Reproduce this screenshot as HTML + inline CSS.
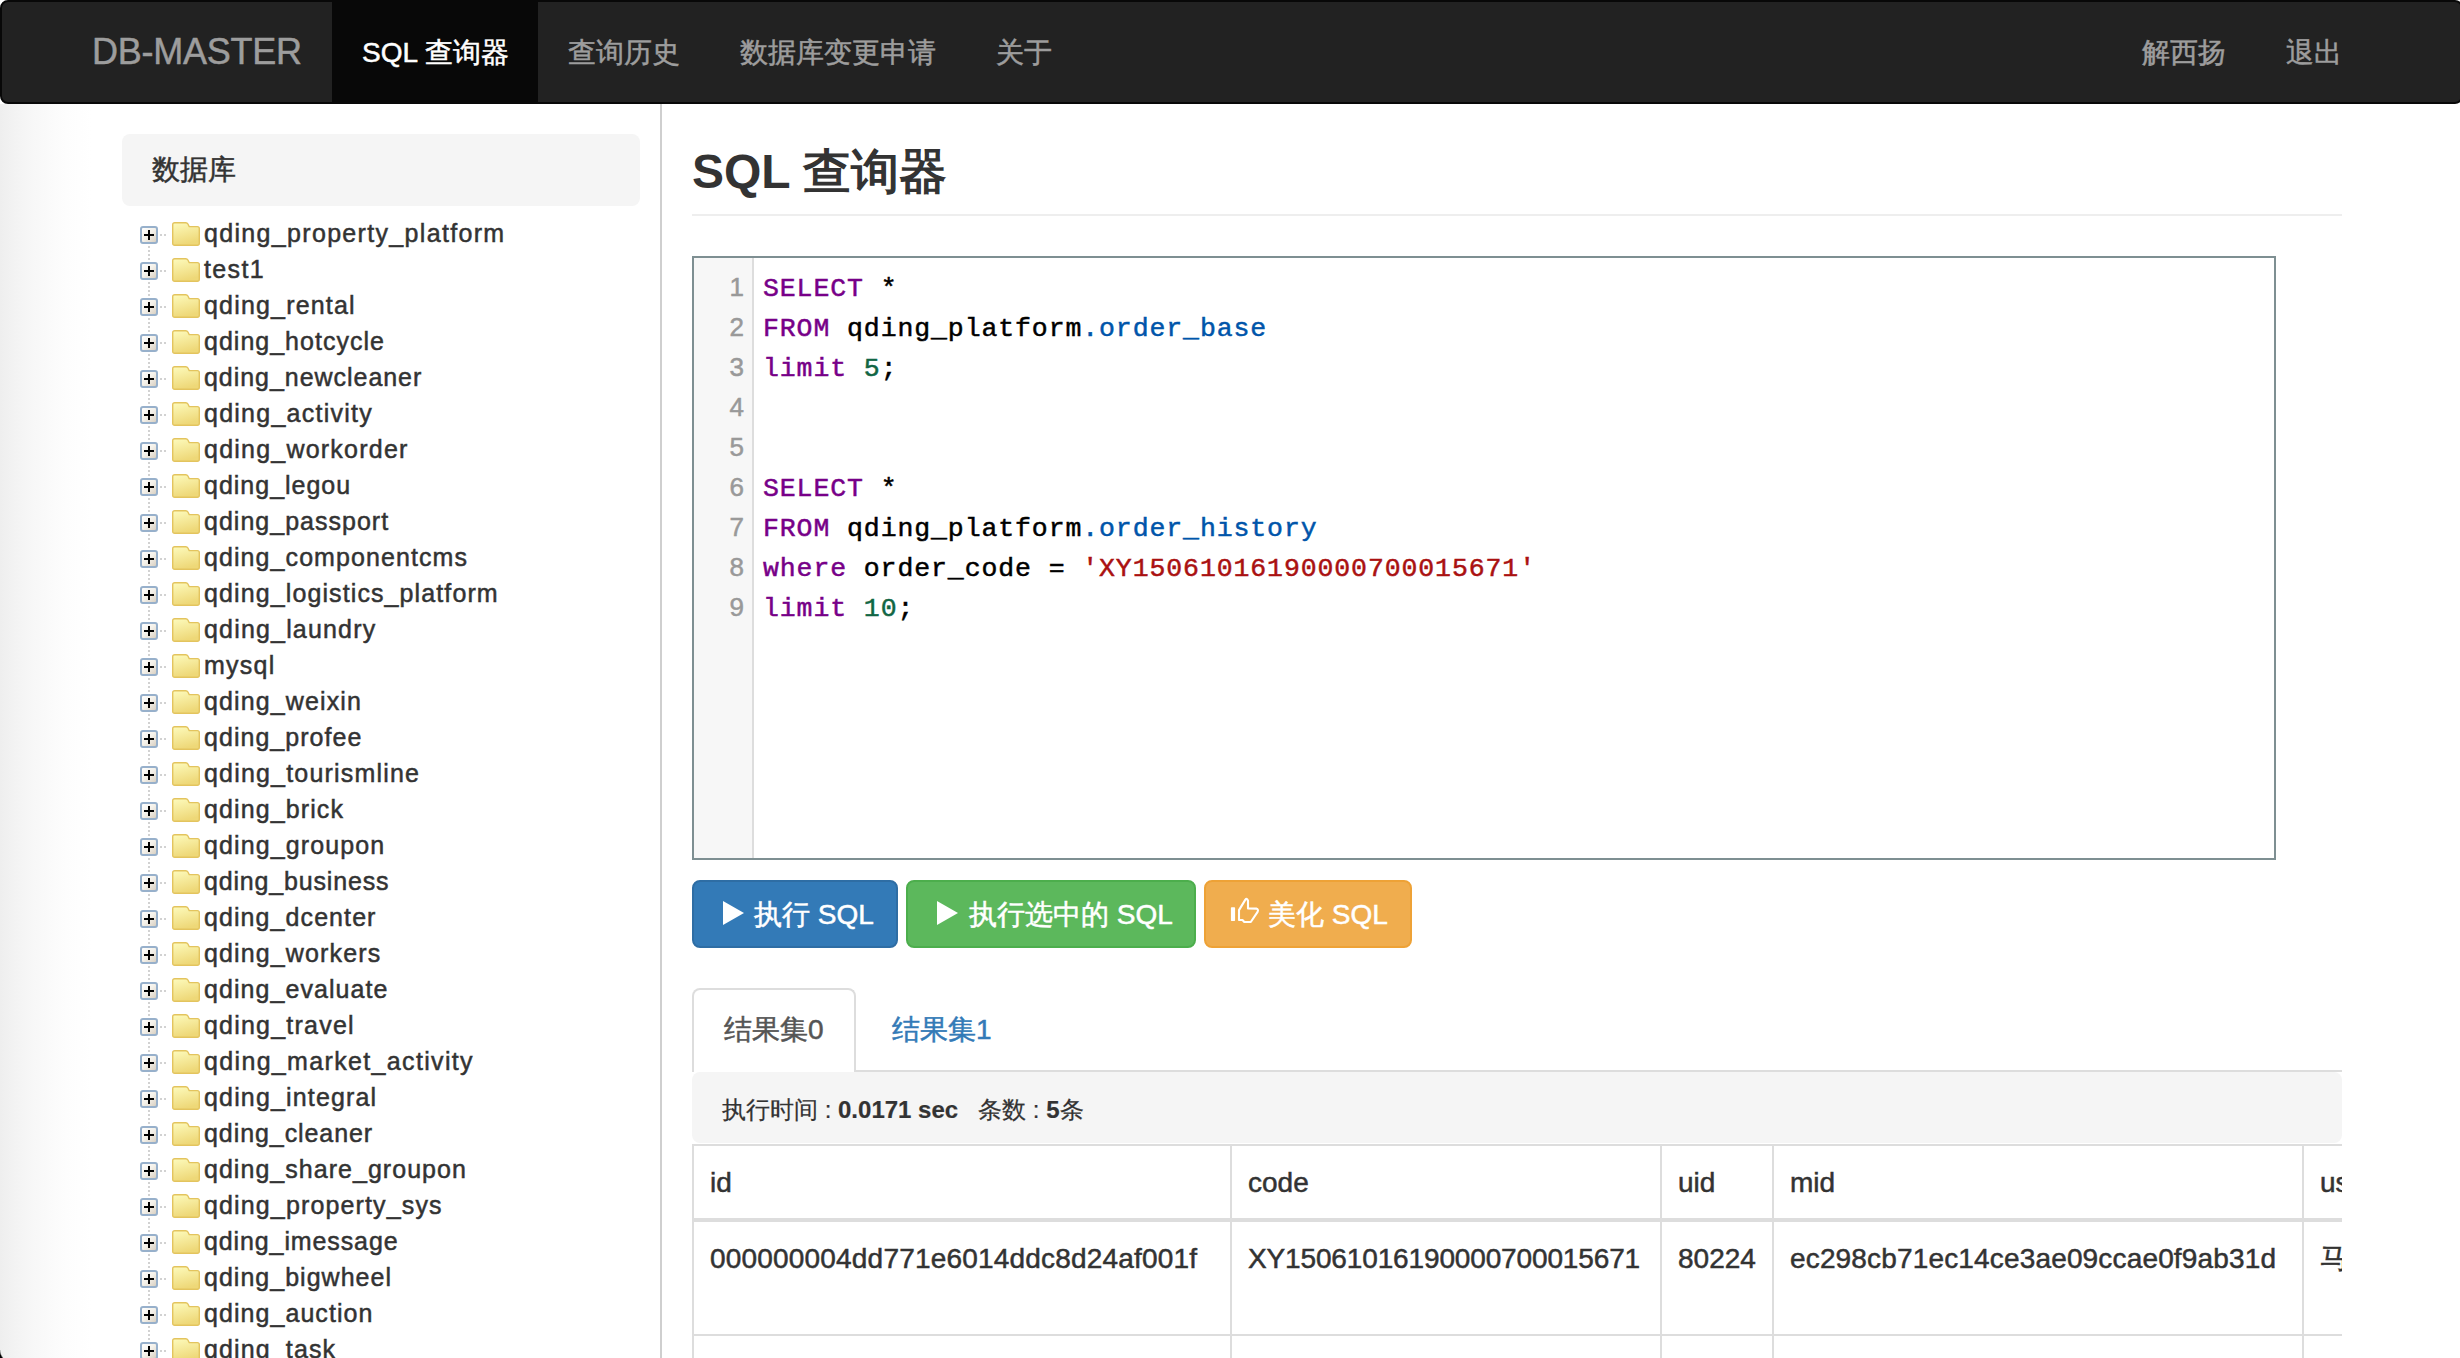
<!DOCTYPE html>
<html><head><meta charset="utf-8">
<style>
html,body{margin:0;padding:0;}
body{width:2460px;height:1358px;overflow:hidden;position:relative;background:#fff;font-family:"Liberation Sans",sans-serif;color:#333;-webkit-text-stroke:0.5px currentColor;}
.abs{position:absolute;}
#lgrad{left:0;top:104px;width:100px;height:1254px;background:linear-gradient(to right,#eeeeee 0px,#f3f3f3 15px,#f7f7f7 32px,#fafafa 48px,#fdfdfd 66px,#fff 92px);}
#nav{left:0;top:0;width:2463px;height:104px;box-sizing:border-box;border:2px solid #080808;border-radius:8px;background:#222;}
.nl{position:absolute;top:32.5px;height:40px;line-height:40px;font-size:28px;color:#9d9d9d;white-space:nowrap;}
#brand{font-size:36px;left:92px;top:31.5px;letter-spacing:-0.25px;}
#active{left:332px;top:2px;width:206px;height:100px;background:#080808;}
#vline{left:660px;top:104px;width:2px;height:1254px;background:#cfcfcf;}
#dbhead{left:122px;top:134px;width:518px;height:72px;background:#f5f5f5;border-radius:8px;}
#dbhead span{position:absolute;left:30px;top:16px;line-height:40px;font-size:28px;color:#333;}
#h1{-webkit-text-stroke:0;left:692px;top:139px;font-size:48px;font-weight:bold;line-height:66px;color:#333;white-space:nowrap;}
#hline{left:692px;top:214px;width:1650px;height:2px;background:#eee;}

.tr{position:absolute;left:140px;height:36px;width:480px;}
.pb{position:absolute;left:0;top:4px;width:18px;height:18px;box-sizing:border-box;border:2px solid #97b0cb;border-radius:3px;background:linear-gradient(135deg,#ffffff 0%,#f4f1ea 50%,#d9d0c2 100%);}
.pb::before{content:"";position:absolute;left:2px;top:6px;width:10px;height:2px;background:#000;}
.pb::after{content:"";position:absolute;left:6px;top:2px;width:2px;height:10px;background:#000;}
.fd{position:absolute;left:32px;top:0;width:28px;height:24px;}

.tr span{position:absolute;left:64px;top:-3px;font-size:25px;line-height:28px;letter-spacing:1.2px;color:#333;white-space:nowrap;}
.dh{position:absolute;left:20px;top:12px;width:8px;height:2px;background:repeating-linear-gradient(to right,#d2d2d2 0 2px,transparent 2px 4px);}
.dv{position:absolute;left:148px;width:2px;background:repeating-linear-gradient(to bottom,#d2d2d2 0 2px,transparent 2px 4px);}
#editor{left:692px;top:256px;width:1584px;height:604px;box-sizing:border-box;border:2px solid #7e8f92;background:#fff;}
#gutter{position:absolute;left:0;top:0;width:58px;height:600px;background:#f7f7f7;border-right:2px solid #ddd;}
.ln{position:absolute;right:8px;width:40px;text-align:right;font-size:26px;line-height:40px;color:#999;}
.cl{position:absolute;left:69px;font-family:"Liberation Mono",monospace;font-size:26.5px;letter-spacing:0.9px;line-height:40px;color:#000;white-space:pre;-webkit-text-stroke:0.5px currentColor;}
.k{color:#770088}.n{color:#116644}.s{color:#aa1111}.v{color:#0055aa}
.btn{position:absolute;top:880px;height:68px;box-sizing:border-box;border:2px solid;border-radius:8px;color:#fff;font-size:28px;line-height:40px;white-space:nowrap;}
.btn span{position:absolute;top:13px;}
.play{position:absolute;top:19px;width:0;height:0;border-left:21px solid #fff;border-top:12.5px solid transparent;border-bottom:12.5px solid transparent;}
#tabs{left:692px;top:988px;}
.tab0{position:absolute;left:692px;top:988px;width:164px;height:84px;box-sizing:border-box;border:2px solid #ddd;border-bottom:none;border-radius:8px 8px 0 0;background:#fff;}
.tabline{position:absolute;left:856px;top:1070px;width:1486px;height:2px;background:#ddd;}
.tabt{position:absolute;top:1010px;font-size:28px;line-height:40px;white-space:nowrap;}
#info{left:692px;top:1072px;width:1650px;height:71px;background:#f5f5f5;border-radius:8px;}
#info span{position:absolute;left:30px;top:18px;font-size:24px;-webkit-text-stroke:0.2px currentColor;line-height:40px;white-space:pre;color:#333;}
#tbl{left:692px;top:1144px;width:1650px;height:214px;overflow:hidden;}
.hl{position:absolute;left:0;width:1650px;background:#ddd;}
.vl{position:absolute;top:0;width:2px;height:214px;background:#ddd;}
.tc{position:absolute;font-size:28px;line-height:40px;white-space:nowrap;color:#333;}
</style></head>
<body>
<div class="abs" id="lgrad"></div>
<div class="abs" id="nav"></div>
<div class="abs" id="active"></div>
<div class="nl" id="brand">DB-MASTER</div>
<div class="nl" style="left:362px;color:#fff">SQL 查询器</div>
<div class="nl" style="left:568px">查询历史</div>
<div class="nl" style="left:740px">数据库变更申请</div>
<div class="nl" style="left:996px">关于</div>
<div class="nl" style="left:2142px">解西扬</div>
<div class="nl" style="left:2286px">退出</div>

<div class="abs" id="vline"></div>
<div class="abs" id="dbhead"><span>数据库</span></div>

<div class="abs" id="h1">SQL <span style="font-weight:normal;-webkit-text-stroke:1.4px #333">查询器</span></div>
<div class="abs" id="hline"></div>

<div class="abs" style="left:0;top:0"><div class="tr" style="top:222px"><i class="pb"></i><i class="dh"></i><i class="fd"><svg width="28" height="24" viewBox="0 0 28 24"><defs><linearGradient id="fg" x1="0" y1="0" x2="0.3" y2="1"><stop offset="0" stop-color="#fdfbbd"/><stop offset="1" stop-color="#eed878"/></linearGradient></defs><path d="M0.7,2.7 Q0.7,0.7 2.7,0.7 L13.8,0.7 Q15.2,0.7 15.9,2 L17.2,4.6 L25.3,4.6 Q27.3,4.6 27.3,6.6 L27.3,21.3 Q27.3,23.3 25.3,23.3 L2.7,23.3 Q0.7,23.3 0.7,21.3 Z" fill="url(#fg)" stroke="#e3c45e" stroke-width="1.4"/></svg></i><span style="letter-spacing:1.326px">qding_property_platform</span></div>
<div class="tr" style="top:258px"><i class="pb"></i><i class="dh"></i><i class="fd"><svg width="28" height="24" viewBox="0 0 28 24"><defs><linearGradient id="fg" x1="0" y1="0" x2="0.3" y2="1"><stop offset="0" stop-color="#fdfbbd"/><stop offset="1" stop-color="#eed878"/></linearGradient></defs><path d="M0.7,2.7 Q0.7,0.7 2.7,0.7 L13.8,0.7 Q15.2,0.7 15.9,2 L17.2,4.6 L25.3,4.6 Q27.3,4.6 27.3,6.6 L27.3,21.3 Q27.3,23.3 25.3,23.3 L2.7,23.3 Q0.7,23.3 0.7,21.3 Z" fill="url(#fg)" stroke="#e3c45e" stroke-width="1.4"/></svg></i><span style="letter-spacing:1.356px">test1</span></div>
<div class="tr" style="top:294px"><i class="pb"></i><i class="dh"></i><i class="fd"><svg width="28" height="24" viewBox="0 0 28 24"><defs><linearGradient id="fg" x1="0" y1="0" x2="0.3" y2="1"><stop offset="0" stop-color="#fdfbbd"/><stop offset="1" stop-color="#eed878"/></linearGradient></defs><path d="M0.7,2.7 Q0.7,0.7 2.7,0.7 L13.8,0.7 Q15.2,0.7 15.9,2 L17.2,4.6 L25.3,4.6 Q27.3,4.6 27.3,6.6 L27.3,21.3 Q27.3,23.3 25.3,23.3 L2.7,23.3 Q0.7,23.3 0.7,21.3 Z" fill="url(#fg)" stroke="#e3c45e" stroke-width="1.4"/></svg></i><span style="letter-spacing:1.179px">qding_rental</span></div>
<div class="tr" style="top:330px"><i class="pb"></i><i class="dh"></i><i class="fd"><svg width="28" height="24" viewBox="0 0 28 24"><defs><linearGradient id="fg" x1="0" y1="0" x2="0.3" y2="1"><stop offset="0" stop-color="#fdfbbd"/><stop offset="1" stop-color="#eed878"/></linearGradient></defs><path d="M0.7,2.7 Q0.7,0.7 2.7,0.7 L13.8,0.7 Q15.2,0.7 15.9,2 L17.2,4.6 L25.3,4.6 Q27.3,4.6 27.3,6.6 L27.3,21.3 Q27.3,23.3 25.3,23.3 L2.7,23.3 Q0.7,23.3 0.7,21.3 Z" fill="url(#fg)" stroke="#e3c45e" stroke-width="1.4"/></svg></i><span style="letter-spacing:1.007px">qding_hotcycle</span></div>
<div class="tr" style="top:366px"><i class="pb"></i><i class="dh"></i><i class="fd"><svg width="28" height="24" viewBox="0 0 28 24"><defs><linearGradient id="fg" x1="0" y1="0" x2="0.3" y2="1"><stop offset="0" stop-color="#fdfbbd"/><stop offset="1" stop-color="#eed878"/></linearGradient></defs><path d="M0.7,2.7 Q0.7,0.7 2.7,0.7 L13.8,0.7 Q15.2,0.7 15.9,2 L17.2,4.6 L25.3,4.6 Q27.3,4.6 27.3,6.6 L27.3,21.3 Q27.3,23.3 25.3,23.3 L2.7,23.3 Q0.7,23.3 0.7,21.3 Z" fill="url(#fg)" stroke="#e3c45e" stroke-width="1.4"/></svg></i><span style="letter-spacing:0.957px">qding_newcleaner</span></div>
<div class="tr" style="top:402px"><i class="pb"></i><i class="dh"></i><i class="fd"><svg width="28" height="24" viewBox="0 0 28 24"><defs><linearGradient id="fg" x1="0" y1="0" x2="0.3" y2="1"><stop offset="0" stop-color="#fdfbbd"/><stop offset="1" stop-color="#eed878"/></linearGradient></defs><path d="M0.7,2.7 Q0.7,0.7 2.7,0.7 L13.8,0.7 Q15.2,0.7 15.9,2 L17.2,4.6 L25.3,4.6 Q27.3,4.6 27.3,6.6 L27.3,21.3 Q27.3,23.3 25.3,23.3 L2.7,23.3 Q0.7,23.3 0.7,21.3 Z" fill="url(#fg)" stroke="#e3c45e" stroke-width="1.4"/></svg></i><span style="letter-spacing:1.25px">qding_activity</span></div>
<div class="tr" style="top:438px"><i class="pb"></i><i class="dh"></i><i class="fd"><svg width="28" height="24" viewBox="0 0 28 24"><defs><linearGradient id="fg" x1="0" y1="0" x2="0.3" y2="1"><stop offset="0" stop-color="#fdfbbd"/><stop offset="1" stop-color="#eed878"/></linearGradient></defs><path d="M0.7,2.7 Q0.7,0.7 2.7,0.7 L13.8,0.7 Q15.2,0.7 15.9,2 L17.2,4.6 L25.3,4.6 Q27.3,4.6 27.3,6.6 L27.3,21.3 Q27.3,23.3 25.3,23.3 L2.7,23.3 Q0.7,23.3 0.7,21.3 Z" fill="url(#fg)" stroke="#e3c45e" stroke-width="1.4"/></svg></i><span style="letter-spacing:1.222px">qding_workorder</span></div>
<div class="tr" style="top:474px"><i class="pb"></i><i class="dh"></i><i class="fd"><svg width="28" height="24" viewBox="0 0 28 24"><defs><linearGradient id="fg" x1="0" y1="0" x2="0.3" y2="1"><stop offset="0" stop-color="#fdfbbd"/><stop offset="1" stop-color="#eed878"/></linearGradient></defs><path d="M0.7,2.7 Q0.7,0.7 2.7,0.7 L13.8,0.7 Q15.2,0.7 15.9,2 L17.2,4.6 L25.3,4.6 Q27.3,4.6 27.3,6.6 L27.3,21.3 Q27.3,23.3 25.3,23.3 L2.7,23.3 Q0.7,23.3 0.7,21.3 Z" fill="url(#fg)" stroke="#e3c45e" stroke-width="1.4"/></svg></i><span style="letter-spacing:0.993px">qding_legou</span></div>
<div class="tr" style="top:510px"><i class="pb"></i><i class="dh"></i><i class="fd"><svg width="28" height="24" viewBox="0 0 28 24"><defs><linearGradient id="fg" x1="0" y1="0" x2="0.3" y2="1"><stop offset="0" stop-color="#fdfbbd"/><stop offset="1" stop-color="#eed878"/></linearGradient></defs><path d="M0.7,2.7 Q0.7,0.7 2.7,0.7 L13.8,0.7 Q15.2,0.7 15.9,2 L17.2,4.6 L25.3,4.6 Q27.3,4.6 27.3,6.6 L27.3,21.3 Q27.3,23.3 25.3,23.3 L2.7,23.3 Q0.7,23.3 0.7,21.3 Z" fill="url(#fg)" stroke="#e3c45e" stroke-width="1.4"/></svg></i><span style="letter-spacing:1.015px">qding_passport</span></div>
<div class="tr" style="top:546px"><i class="pb"></i><i class="dh"></i><i class="fd"><svg width="28" height="24" viewBox="0 0 28 24"><defs><linearGradient id="fg" x1="0" y1="0" x2="0.3" y2="1"><stop offset="0" stop-color="#fdfbbd"/><stop offset="1" stop-color="#eed878"/></linearGradient></defs><path d="M0.7,2.7 Q0.7,0.7 2.7,0.7 L13.8,0.7 Q15.2,0.7 15.9,2 L17.2,4.6 L25.3,4.6 Q27.3,4.6 27.3,6.6 L27.3,21.3 Q27.3,23.3 25.3,23.3 L2.7,23.3 Q0.7,23.3 0.7,21.3 Z" fill="url(#fg)" stroke="#e3c45e" stroke-width="1.4"/></svg></i><span style="letter-spacing:1.079px">qding_componentcms</span></div>
<div class="tr" style="top:582px"><i class="pb"></i><i class="dh"></i><i class="fd"><svg width="28" height="24" viewBox="0 0 28 24"><defs><linearGradient id="fg" x1="0" y1="0" x2="0.3" y2="1"><stop offset="0" stop-color="#fdfbbd"/><stop offset="1" stop-color="#eed878"/></linearGradient></defs><path d="M0.7,2.7 Q0.7,0.7 2.7,0.7 L13.8,0.7 Q15.2,0.7 15.9,2 L17.2,4.6 L25.3,4.6 Q27.3,4.6 27.3,6.6 L27.3,21.3 Q27.3,23.3 25.3,23.3 L2.7,23.3 Q0.7,23.3 0.7,21.3 Z" fill="url(#fg)" stroke="#e3c45e" stroke-width="1.4"/></svg></i><span style="letter-spacing:1.107px">qding_logistics_platform</span></div>
<div class="tr" style="top:618px"><i class="pb"></i><i class="dh"></i><i class="fd"><svg width="28" height="24" viewBox="0 0 28 24"><defs><linearGradient id="fg" x1="0" y1="0" x2="0.3" y2="1"><stop offset="0" stop-color="#fdfbbd"/><stop offset="1" stop-color="#eed878"/></linearGradient></defs><path d="M0.7,2.7 Q0.7,0.7 2.7,0.7 L13.8,0.7 Q15.2,0.7 15.9,2 L17.2,4.6 L25.3,4.6 Q27.3,4.6 27.3,6.6 L27.3,21.3 Q27.3,23.3 25.3,23.3 L2.7,23.3 Q0.7,23.3 0.7,21.3 Z" fill="url(#fg)" stroke="#e3c45e" stroke-width="1.4"/></svg></i><span style="letter-spacing:1.176px">qding_laundry</span></div>
<div class="tr" style="top:654px"><i class="pb"></i><i class="dh"></i><i class="fd"><svg width="28" height="24" viewBox="0 0 28 24"><defs><linearGradient id="fg" x1="0" y1="0" x2="0.3" y2="1"><stop offset="0" stop-color="#fdfbbd"/><stop offset="1" stop-color="#eed878"/></linearGradient></defs><path d="M0.7,2.7 Q0.7,0.7 2.7,0.7 L13.8,0.7 Q15.2,0.7 15.9,2 L17.2,4.6 L25.3,4.6 Q27.3,4.6 27.3,6.6 L27.3,21.3 Q27.3,23.3 25.3,23.3 L2.7,23.3 Q0.7,23.3 0.7,21.3 Z" fill="url(#fg)" stroke="#e3c45e" stroke-width="1.4"/></svg></i><span style="letter-spacing:1.259px">mysql</span></div>
<div class="tr" style="top:690px"><i class="pb"></i><i class="dh"></i><i class="fd"><svg width="28" height="24" viewBox="0 0 28 24"><defs><linearGradient id="fg" x1="0" y1="0" x2="0.3" y2="1"><stop offset="0" stop-color="#fdfbbd"/><stop offset="1" stop-color="#eed878"/></linearGradient></defs><path d="M0.7,2.7 Q0.7,0.7 2.7,0.7 L13.8,0.7 Q15.2,0.7 15.9,2 L17.2,4.6 L25.3,4.6 Q27.3,4.6 27.3,6.6 L27.3,21.3 Q27.3,23.3 25.3,23.3 L2.7,23.3 Q0.7,23.3 0.7,21.3 Z" fill="url(#fg)" stroke="#e3c45e" stroke-width="1.4"/></svg></i><span style="letter-spacing:1.126px">qding_weixin</span></div>
<div class="tr" style="top:726px"><i class="pb"></i><i class="dh"></i><i class="fd"><svg width="28" height="24" viewBox="0 0 28 24"><defs><linearGradient id="fg" x1="0" y1="0" x2="0.3" y2="1"><stop offset="0" stop-color="#fdfbbd"/><stop offset="1" stop-color="#eed878"/></linearGradient></defs><path d="M0.7,2.7 Q0.7,0.7 2.7,0.7 L13.8,0.7 Q15.2,0.7 15.9,2 L17.2,4.6 L25.3,4.6 Q27.3,4.6 27.3,6.6 L27.3,21.3 Q27.3,23.3 25.3,23.3 L2.7,23.3 Q0.7,23.3 0.7,21.3 Z" fill="url(#fg)" stroke="#e3c45e" stroke-width="1.4"/></svg></i><span style="letter-spacing:1.036px">qding_profee</span></div>
<div class="tr" style="top:762px"><i class="pb"></i><i class="dh"></i><i class="fd"><svg width="28" height="24" viewBox="0 0 28 24"><defs><linearGradient id="fg" x1="0" y1="0" x2="0.3" y2="1"><stop offset="0" stop-color="#fdfbbd"/><stop offset="1" stop-color="#eed878"/></linearGradient></defs><path d="M0.7,2.7 Q0.7,0.7 2.7,0.7 L13.8,0.7 Q15.2,0.7 15.9,2 L17.2,4.6 L25.3,4.6 Q27.3,4.6 27.3,6.6 L27.3,21.3 Q27.3,23.3 25.3,23.3 L2.7,23.3 Q0.7,23.3 0.7,21.3 Z" fill="url(#fg)" stroke="#e3c45e" stroke-width="1.4"/></svg></i><span style="letter-spacing:1.186px">qding_tourismline</span></div>
<div class="tr" style="top:798px"><i class="pb"></i><i class="dh"></i><i class="fd"><svg width="28" height="24" viewBox="0 0 28 24"><defs><linearGradient id="fg" x1="0" y1="0" x2="0.3" y2="1"><stop offset="0" stop-color="#fdfbbd"/><stop offset="1" stop-color="#eed878"/></linearGradient></defs><path d="M0.7,2.7 Q0.7,0.7 2.7,0.7 L13.8,0.7 Q15.2,0.7 15.9,2 L17.2,4.6 L25.3,4.6 Q27.3,4.6 27.3,6.6 L27.3,21.3 Q27.3,23.3 25.3,23.3 L2.7,23.3 Q0.7,23.3 0.7,21.3 Z" fill="url(#fg)" stroke="#e3c45e" stroke-width="1.4"/></svg></i><span style="letter-spacing:1.11px">qding_brick</span></div>
<div class="tr" style="top:834px"><i class="pb"></i><i class="dh"></i><i class="fd"><svg width="28" height="24" viewBox="0 0 28 24"><defs><linearGradient id="fg" x1="0" y1="0" x2="0.3" y2="1"><stop offset="0" stop-color="#fdfbbd"/><stop offset="1" stop-color="#eed878"/></linearGradient></defs><path d="M0.7,2.7 Q0.7,0.7 2.7,0.7 L13.8,0.7 Q15.2,0.7 15.9,2 L17.2,4.6 L25.3,4.6 Q27.3,4.6 27.3,6.6 L27.3,21.3 Q27.3,23.3 25.3,23.3 L2.7,23.3 Q0.7,23.3 0.7,21.3 Z" fill="url(#fg)" stroke="#e3c45e" stroke-width="1.4"/></svg></i><span style="letter-spacing:1.109px">qding_groupon</span></div>
<div class="tr" style="top:870px"><i class="pb"></i><i class="dh"></i><i class="fd"><svg width="28" height="24" viewBox="0 0 28 24"><defs><linearGradient id="fg" x1="0" y1="0" x2="0.3" y2="1"><stop offset="0" stop-color="#fdfbbd"/><stop offset="1" stop-color="#eed878"/></linearGradient></defs><path d="M0.7,2.7 Q0.7,0.7 2.7,0.7 L13.8,0.7 Q15.2,0.7 15.9,2 L17.2,4.6 L25.3,4.6 Q27.3,4.6 27.3,6.6 L27.3,21.3 Q27.3,23.3 25.3,23.3 L2.7,23.3 Q0.7,23.3 0.7,21.3 Z" fill="url(#fg)" stroke="#e3c45e" stroke-width="1.4"/></svg></i><span style="letter-spacing:0.825px">qding_business</span></div>
<div class="tr" style="top:906px"><i class="pb"></i><i class="dh"></i><i class="fd"><svg width="28" height="24" viewBox="0 0 28 24"><defs><linearGradient id="fg" x1="0" y1="0" x2="0.3" y2="1"><stop offset="0" stop-color="#fdfbbd"/><stop offset="1" stop-color="#eed878"/></linearGradient></defs><path d="M0.7,2.7 Q0.7,0.7 2.7,0.7 L13.8,0.7 Q15.2,0.7 15.9,2 L17.2,4.6 L25.3,4.6 Q27.3,4.6 27.3,6.6 L27.3,21.3 Q27.3,23.3 25.3,23.3 L2.7,23.3 Q0.7,23.3 0.7,21.3 Z" fill="url(#fg)" stroke="#e3c45e" stroke-width="1.4"/></svg></i><span style="letter-spacing:1.082px">qding_dcenter</span></div>
<div class="tr" style="top:942px"><i class="pb"></i><i class="dh"></i><i class="fd"><svg width="28" height="24" viewBox="0 0 28 24"><defs><linearGradient id="fg" x1="0" y1="0" x2="0.3" y2="1"><stop offset="0" stop-color="#fdfbbd"/><stop offset="1" stop-color="#eed878"/></linearGradient></defs><path d="M0.7,2.7 Q0.7,0.7 2.7,0.7 L13.8,0.7 Q15.2,0.7 15.9,2 L17.2,4.6 L25.3,4.6 Q27.3,4.6 27.3,6.6 L27.3,21.3 Q27.3,23.3 25.3,23.3 L2.7,23.3 Q0.7,23.3 0.7,21.3 Z" fill="url(#fg)" stroke="#e3c45e" stroke-width="1.4"/></svg></i><span style="letter-spacing:1.13px">qding_workers</span></div>
<div class="tr" style="top:978px"><i class="pb"></i><i class="dh"></i><i class="fd"><svg width="28" height="24" viewBox="0 0 28 24"><defs><linearGradient id="fg" x1="0" y1="0" x2="0.3" y2="1"><stop offset="0" stop-color="#fdfbbd"/><stop offset="1" stop-color="#eed878"/></linearGradient></defs><path d="M0.7,2.7 Q0.7,0.7 2.7,0.7 L13.8,0.7 Q15.2,0.7 15.9,2 L17.2,4.6 L25.3,4.6 Q27.3,4.6 27.3,6.6 L27.3,21.3 Q27.3,23.3 25.3,23.3 L2.7,23.3 Q0.7,23.3 0.7,21.3 Z" fill="url(#fg)" stroke="#e3c45e" stroke-width="1.4"/></svg></i><span style="letter-spacing:1.062px">qding_evaluate</span></div>
<div class="tr" style="top:1014px"><i class="pb"></i><i class="dh"></i><i class="fd"><svg width="28" height="24" viewBox="0 0 28 24"><defs><linearGradient id="fg" x1="0" y1="0" x2="0.3" y2="1"><stop offset="0" stop-color="#fdfbbd"/><stop offset="1" stop-color="#eed878"/></linearGradient></defs><path d="M0.7,2.7 Q0.7,0.7 2.7,0.7 L13.8,0.7 Q15.2,0.7 15.9,2 L17.2,4.6 L25.3,4.6 Q27.3,4.6 27.3,6.6 L27.3,21.3 Q27.3,23.3 25.3,23.3 L2.7,23.3 Q0.7,23.3 0.7,21.3 Z" fill="url(#fg)" stroke="#e3c45e" stroke-width="1.4"/></svg></i><span style="letter-spacing:1.214px">qding_travel</span></div>
<div class="tr" style="top:1050px"><i class="pb"></i><i class="dh"></i><i class="fd"><svg width="28" height="24" viewBox="0 0 28 24"><defs><linearGradient id="fg" x1="0" y1="0" x2="0.3" y2="1"><stop offset="0" stop-color="#fdfbbd"/><stop offset="1" stop-color="#eed878"/></linearGradient></defs><path d="M0.7,2.7 Q0.7,0.7 2.7,0.7 L13.8,0.7 Q15.2,0.7 15.9,2 L17.2,4.6 L25.3,4.6 Q27.3,4.6 27.3,6.6 L27.3,21.3 Q27.3,23.3 25.3,23.3 L2.7,23.3 Q0.7,23.3 0.7,21.3 Z" fill="url(#fg)" stroke="#e3c45e" stroke-width="1.4"/></svg></i><span style="letter-spacing:1.34px">qding_market_activity</span></div>
<div class="tr" style="top:1086px"><i class="pb"></i><i class="dh"></i><i class="fd"><svg width="28" height="24" viewBox="0 0 28 24"><defs><linearGradient id="fg" x1="0" y1="0" x2="0.3" y2="1"><stop offset="0" stop-color="#fdfbbd"/><stop offset="1" stop-color="#eed878"/></linearGradient></defs><path d="M0.7,2.7 Q0.7,0.7 2.7,0.7 L13.8,0.7 Q15.2,0.7 15.9,2 L17.2,4.6 L25.3,4.6 Q27.3,4.6 27.3,6.6 L27.3,21.3 Q27.3,23.3 25.3,23.3 L2.7,23.3 Q0.7,23.3 0.7,21.3 Z" fill="url(#fg)" stroke="#e3c45e" stroke-width="1.4"/></svg></i><span style="letter-spacing:1.159px">qding_integral</span></div>
<div class="tr" style="top:1122px"><i class="pb"></i><i class="dh"></i><i class="fd"><svg width="28" height="24" viewBox="0 0 28 24"><defs><linearGradient id="fg" x1="0" y1="0" x2="0.3" y2="1"><stop offset="0" stop-color="#fdfbbd"/><stop offset="1" stop-color="#eed878"/></linearGradient></defs><path d="M0.7,2.7 Q0.7,0.7 2.7,0.7 L13.8,0.7 Q15.2,0.7 15.9,2 L17.2,4.6 L25.3,4.6 Q27.3,4.6 27.3,6.6 L27.3,21.3 Q27.3,23.3 25.3,23.3 L2.7,23.3 Q0.7,23.3 0.7,21.3 Z" fill="url(#fg)" stroke="#e3c45e" stroke-width="1.4"/></svg></i><span style="letter-spacing:0.927px">qding_cleaner</span></div>
<div class="tr" style="top:1158px"><i class="pb"></i><i class="dh"></i><i class="fd"><svg width="28" height="24" viewBox="0 0 28 24"><defs><linearGradient id="fg" x1="0" y1="0" x2="0.3" y2="1"><stop offset="0" stop-color="#fdfbbd"/><stop offset="1" stop-color="#eed878"/></linearGradient></defs><path d="M0.7,2.7 Q0.7,0.7 2.7,0.7 L13.8,0.7 Q15.2,0.7 15.9,2 L17.2,4.6 L25.3,4.6 Q27.3,4.6 27.3,6.6 L27.3,21.3 Q27.3,23.3 25.3,23.3 L2.7,23.3 Q0.7,23.3 0.7,21.3 Z" fill="url(#fg)" stroke="#e3c45e" stroke-width="1.4"/></svg></i><span style="letter-spacing:1.032px">qding_share_groupon</span></div>
<div class="tr" style="top:1194px"><i class="pb"></i><i class="dh"></i><i class="fd"><svg width="28" height="24" viewBox="0 0 28 24"><defs><linearGradient id="fg" x1="0" y1="0" x2="0.3" y2="1"><stop offset="0" stop-color="#fdfbbd"/><stop offset="1" stop-color="#eed878"/></linearGradient></defs><path d="M0.7,2.7 Q0.7,0.7 2.7,0.7 L13.8,0.7 Q15.2,0.7 15.9,2 L17.2,4.6 L25.3,4.6 Q27.3,4.6 27.3,6.6 L27.3,21.3 Q27.3,23.3 25.3,23.3 L2.7,23.3 Q0.7,23.3 0.7,21.3 Z" fill="url(#fg)" stroke="#e3c45e" stroke-width="1.4"/></svg></i><span style="letter-spacing:1.138px">qding_property_sys</span></div>
<div class="tr" style="top:1230px"><i class="pb"></i><i class="dh"></i><i class="fd"><svg width="28" height="24" viewBox="0 0 28 24"><defs><linearGradient id="fg" x1="0" y1="0" x2="0.3" y2="1"><stop offset="0" stop-color="#fdfbbd"/><stop offset="1" stop-color="#eed878"/></linearGradient></defs><path d="M0.7,2.7 Q0.7,0.7 2.7,0.7 L13.8,0.7 Q15.2,0.7 15.9,2 L17.2,4.6 L25.3,4.6 Q27.3,4.6 27.3,6.6 L27.3,21.3 Q27.3,23.3 25.3,23.3 L2.7,23.3 Q0.7,23.3 0.7,21.3 Z" fill="url(#fg)" stroke="#e3c45e" stroke-width="1.4"/></svg></i><span style="letter-spacing:0.887px">qding_imessage</span></div>
<div class="tr" style="top:1266px"><i class="pb"></i><i class="dh"></i><i class="fd"><svg width="28" height="24" viewBox="0 0 28 24"><defs><linearGradient id="fg" x1="0" y1="0" x2="0.3" y2="1"><stop offset="0" stop-color="#fdfbbd"/><stop offset="1" stop-color="#eed878"/></linearGradient></defs><path d="M0.7,2.7 Q0.7,0.7 2.7,0.7 L13.8,0.7 Q15.2,0.7 15.9,2 L17.2,4.6 L25.3,4.6 Q27.3,4.6 27.3,6.6 L27.3,21.3 Q27.3,23.3 25.3,23.3 L2.7,23.3 Q0.7,23.3 0.7,21.3 Z" fill="url(#fg)" stroke="#e3c45e" stroke-width="1.4"/></svg></i><span style="letter-spacing:1.021px">qding_bigwheel</span></div>
<div class="tr" style="top:1302px"><i class="pb"></i><i class="dh"></i><i class="fd"><svg width="28" height="24" viewBox="0 0 28 24"><defs><linearGradient id="fg" x1="0" y1="0" x2="0.3" y2="1"><stop offset="0" stop-color="#fdfbbd"/><stop offset="1" stop-color="#eed878"/></linearGradient></defs><path d="M0.7,2.7 Q0.7,0.7 2.7,0.7 L13.8,0.7 Q15.2,0.7 15.9,2 L17.2,4.6 L25.3,4.6 Q27.3,4.6 27.3,6.6 L27.3,21.3 Q27.3,23.3 25.3,23.3 L2.7,23.3 Q0.7,23.3 0.7,21.3 Z" fill="url(#fg)" stroke="#e3c45e" stroke-width="1.4"/></svg></i><span style="letter-spacing:1.06px">qding_auction</span></div>
<div class="tr" style="top:1338px"><i class="pb"></i><i class="dh"></i><i class="fd"><svg width="28" height="24" viewBox="0 0 28 24"><defs><linearGradient id="fg" x1="0" y1="0" x2="0.3" y2="1"><stop offset="0" stop-color="#fdfbbd"/><stop offset="1" stop-color="#eed878"/></linearGradient></defs><path d="M0.7,2.7 Q0.7,0.7 2.7,0.7 L13.8,0.7 Q15.2,0.7 15.9,2 L17.2,4.6 L25.3,4.6 Q27.3,4.6 27.3,6.6 L27.3,21.3 Q27.3,23.3 25.3,23.3 L2.7,23.3 Q0.7,23.3 0.7,21.3 Z" fill="url(#fg)" stroke="#e3c45e" stroke-width="1.4"/></svg></i><span style="letter-spacing:1.123px">qding_task</span></div></div>
<div class="abs" style="left:0;top:1350px;width:12px;height:8px;background:radial-gradient(circle at 12px 0px,rgba(0,0,0,0) 11.3px,#000 12.7px)"></div><div class="dv" style="top:246px;height:14px"></div><div class="dv" style="top:282px;height:14px"></div><div class="dv" style="top:318px;height:14px"></div><div class="dv" style="top:354px;height:14px"></div><div class="dv" style="top:390px;height:14px"></div><div class="dv" style="top:426px;height:14px"></div><div class="dv" style="top:462px;height:14px"></div><div class="dv" style="top:498px;height:14px"></div><div class="dv" style="top:534px;height:14px"></div><div class="dv" style="top:570px;height:14px"></div><div class="dv" style="top:606px;height:14px"></div><div class="dv" style="top:642px;height:14px"></div><div class="dv" style="top:678px;height:14px"></div><div class="dv" style="top:714px;height:14px"></div><div class="dv" style="top:750px;height:14px"></div><div class="dv" style="top:786px;height:14px"></div><div class="dv" style="top:822px;height:14px"></div><div class="dv" style="top:858px;height:14px"></div><div class="dv" style="top:894px;height:14px"></div><div class="dv" style="top:930px;height:14px"></div><div class="dv" style="top:966px;height:14px"></div><div class="dv" style="top:1002px;height:14px"></div><div class="dv" style="top:1038px;height:14px"></div><div class="dv" style="top:1074px;height:14px"></div><div class="dv" style="top:1110px;height:14px"></div><div class="dv" style="top:1146px;height:14px"></div><div class="dv" style="top:1182px;height:14px"></div><div class="dv" style="top:1218px;height:14px"></div><div class="dv" style="top:1254px;height:14px"></div><div class="dv" style="top:1290px;height:14px"></div><div class="dv" style="top:1326px;height:14px"></div><div class="abs" id="editor"><div id="gutter"><div class="ln" style="top:9px">1</div><div class="ln" style="top:49px">2</div><div class="ln" style="top:89px">3</div><div class="ln" style="top:129px">4</div><div class="ln" style="top:169px">5</div><div class="ln" style="top:209px">6</div><div class="ln" style="top:249px">7</div><div class="ln" style="top:289px">8</div><div class="ln" style="top:329px">9</div></div><div class="cl" style="top:11.2px"><span class="k">SELECT</span> *</div><div class="cl" style="top:51.2px"><span class="k">FROM</span> qding_platform<span class="v">.order_base</span></div><div class="cl" style="top:91.2px"><span class="k">limit</span> <span class="n">5</span>;</div><div class="cl" style="top:131.2px"></div><div class="cl" style="top:171.2px"></div><div class="cl" style="top:211.2px"><span class="k">SELECT</span> *</div><div class="cl" style="top:251.2px"><span class="k">FROM</span> qding_platform<span class="v">.order_history</span></div><div class="cl" style="top:291.2px"><span class="k">where</span> order_code = <span class="s">'XY15061016190000700015671'</span></div><div class="cl" style="top:331.2px"><span class="k">limit</span> <span class="n">10</span>;</div></div>
<div class="btn" style="left:692px;width:206px;background:#337ab7;border-color:#2e6da4"><i class="play" style="left:28.7px"></i><span style="left:60px">执行 SQL</span></div>
<div class="btn" style="left:906px;width:290px;background:#5cb85c;border-color:#4cae4c"><i class="play" style="left:29px"></i><span style="left:61px">执行选中的 SQL</span></div>
<div class="btn" style="left:1204px;width:208px;background:#f0ad4e;border-color:#eea236"><svg class="abs" style="left:14px;top:8px" width="44" height="40" viewBox="0 0 44 40"><rect x="10.9" y="17.3" width="4.2" height="13.8" rx="0.8" fill="#fff"/><path d="M19,30 L19,20.1 L25.4,9.6 Q26.8,7.8 28,10.7 L28,18.4 L36.3,18.6 Q38.8,19.3 37.6,21.9 L30.8,32 L24.3,32 L22.5,30 Z" fill="none" stroke="#fff" stroke-width="2.1" stroke-linejoin="round"/></svg><span style="left:62px">美化 SQL</span></div>
<div class="tab0"></div><div class="tabline"></div>
<div class="tabt" style="left:724px;color:#555">结果集0</div>
<div class="tabt" style="left:892px;color:#337ab7">结果集1</div>
<div class="abs" id="info"><span>执行时间 : <b>0.0171 sec</b>   条数 : <b>5</b>条</span></div>
<div class="abs" id="tbl"><div class="hl" style="top:0;height:2px"></div><div class="hl" style="top:74px;height:4px"></div><div class="hl" style="top:190px;height:2px"></div><div class="vl" style="left:0px"></div><div class="vl" style="left:538px"></div><div class="vl" style="left:968px"></div><div class="vl" style="left:1080px"></div><div class="vl" style="left:1610px"></div><div class="tc" style="left:18px;top:19px">id</div><div class="tc" style="left:18px;top:95px;letter-spacing:0.19px">000000004dd771e6014ddc8d24af001f</div><div class="tc" style="left:556px;top:19px">code</div><div class="tc" style="left:556px;top:95px;letter-spacing:-0.14px">XY15061016190000700015671</div><div class="tc" style="left:986px;top:19px">uid</div><div class="tc" style="left:986px;top:95px;letter-spacing:0px">80224</div><div class="tc" style="left:1098px;top:19px">mid</div><div class="tc" style="left:1098px;top:95px;letter-spacing:0.16px">ec298cb71ec14ce3ae09ccae0f9ab31d</div><div class="tc" style="left:1628px;top:19px">us</div><div class="tc" style="left:1628px;top:95px;letter-spacing:0px">马</div></div>
</body></html>
